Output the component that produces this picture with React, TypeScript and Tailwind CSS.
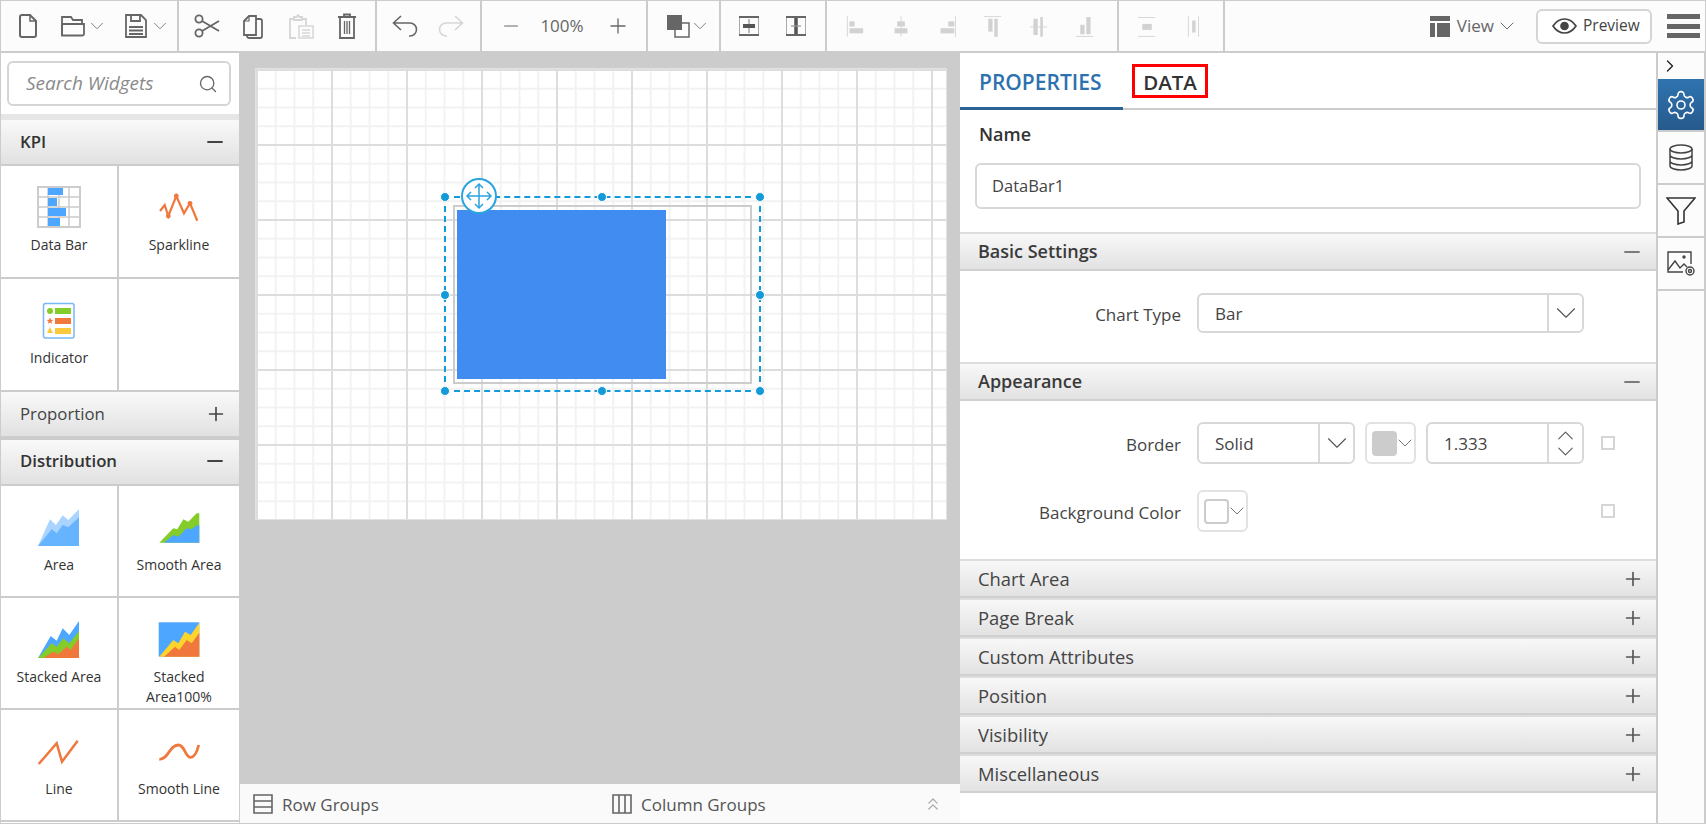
import React from "react";
import { ChevronDown, ChevronUp, ChevronRight, Search, Minus, Plus, ChevronsUp } from "lucide-react";

const FONT = "font-['Open_Sans',sans-serif]";

// toolbar icons, drawn to match the reference strokes
const Doc = () => (
  <svg width="20" height="24" viewBox="0 0 20 24" fill="none" stroke="#666" strokeWidth="2">
    <path d="M2 3a2 2 0 0 1 2-2h8l6 6v14a2 2 0 0 1-2 2H4a2 2 0 0 1-2-2z" />
    <path d="M12 1v6h6" strokeWidth="1.5" />
  </svg>
);
const Folder = () => (
  <svg width="24" height="22" viewBox="0 0 24 22" fill="none" stroke="#666" strokeWidth="1.8">
    <path d="M1 20V2h9l2 3h9v4" />
    <path d="M1 9h22v10a1.5 1.5 0 0 1-1.5 1.5H1z" />
  </svg>
);
const Save = () => (
  <svg width="22" height="24" viewBox="0 0 22 24" fill="none" stroke="#666" strokeWidth="1.8">
    <path d="M1 1h15l5 5v17H1z" />
    <path d="M6 1v6h9V1" />
    <path d="M4 13h14M4 16.500h14M4 20h14" />
  </svg>
);
const Scissors = () => (
  <svg width="26" height="26" viewBox="0 0 26 26" fill="none" stroke="#666" strokeWidth="1.8">
    <circle cx="5" cy="6" r="3.600" />
    <circle cx="5" cy="20" r="3.600" />
    <path d="M8 8l17 10M8 18L25 8" />
  </svg>
);
const CopyIcon = ({ color = "#666" }: { color?: string }) => (
  <svg width="20" height="25" viewBox="0 0 20 25" fill="none" stroke={color} strokeWidth="1.8">
    <path d="M1 7l5-5h7v19H1z" />
    <path d="M1 7h5V2" strokeWidth="1.2" />
    <path d="M13 5h4a2 2 0 0 1 2 2v15a2 2 0 0 1-2 2H6a2 2 0 0 1-2-2v-1" />
  </svg>
);
const Paste = () => (
  <svg width="26" height="25" viewBox="0 0 26 25" fill="none" stroke="#d6d6d6" strokeWidth="1.8">
    <path d="M8 24H2V5h4M14 5h4v6" />
    <path d="M6 6V3h2.500l1.500-2 1.500 2H14v3z" />
    <path d="M11 12h14v12H11zM14 16h8M14 19h8M14 22h8" strokeWidth="1.500" />
  </svg>
);
const Trash = () => (
  <svg width="20" height="26" viewBox="0 0 20 26" fill="none" stroke="#666" strokeWidth="1.8">
    <path d="M1 4h18M7 4V1.500h6V4" />
    <path d="M3 4v21h14V4" />
    <path d="M7.500 8v13M10 8v13M12.500 8v13" strokeWidth="1.300" />
  </svg>
);
const Undo = ({ color = "#666" }: { color?: string }) => (
  <svg width="26" height="24" viewBox="0 0 26 24" fill="none" stroke={color} strokeWidth="1.6">
    <path d="M9 2L1.500 9 9 16M1.500 9H18a6.500 6.500 0 0 1 0 13h-1" />
  </svg>
);
const Order = () => (
  <svg width="24" height="24" viewBox="0 0 24 24">
    <rect x="9" y="9" width="14" height="14" fill="#fff" stroke="#666" strokeWidth="1.500" />
    <rect x="1" y="1" width="15" height="15" fill="#666" />
  </svg>
);
const SpaceIcon = ({ vertical }: { vertical?: boolean }) => (
  <svg width="20" height="20" viewBox="0 0 20 20" fill="none">
    <rect x="0.500" y="1" width="19" height="18" stroke="#aaa" strokeWidth="1" />
    <path d="M0 1h20M0 19h20" stroke="#666" strokeWidth="2" />
    {vertical ? (
      <>
        <path d="M10 2v16" stroke="#555" strokeWidth="3.500" />
        <path d="M5 10h10" stroke="#999" strokeWidth="1.300" />
      </>
    ) : (
      <>
        <path d="M10 3v14" stroke="#999" strokeWidth="1.300" />
        <path d="M4 10h12" stroke="#555" strokeWidth="4" />
      </>
    )}
  </svg>
);

// the greyed-out align buttons
const Align = ({ kind }: { kind: number }) => {
  const c = "#d2d2d2";
  const rects: number[][][] = [
    [[1, 0, 1, 24], [4, 6, 6, 6], [4, 14, 16, 6]],
    [[10, 0, 1, 24], [6, 6, 9, 6], [3, 14, 15, 6]],
    [[20, 0, 1, 24], [12, 6, 7, 6], [3, 14, 16, 6]],
    [[0, 0, 20, 1], [5, 3, 5, 15], [12, 3, 4, 21]],
    [[0, 12, 20, 1], [4, 3, 5, 19], [12, 1, 3, 23]],
    [[0, 23, 20, 1], [5, 10, 5, 11], [12, 1, 5, 20]],
    [[0, 1, 20, 1], [0, 23, 20, 1], [5, 9, 11, 7]],
    [[1, 0, 1, 24], [13, 0, 1, 24], [6, 5, 4, 14]],
  ][kind];
  return (
    <svg width="18" height="21" viewBox="0 0 21 24">
      {rects.map((r, i) => (
        <rect key={i} x={r[0]} y={r[1]} width={r[2]} height={r[3]} fill={c} />
      ))}
    </svg>
  );
};

const Sep = () => <div className="h-full w-[2px] shrink-0 bg-[#ccc]" />;
const Chev = () => <ChevronDown size={22} strokeWidth={0.9} color="#666" className="-mx-[4px]" />;

function Toolbar() {
  return (
    <div className="flex h-[53px] shrink-0 items-center border-x border-t border-b-2 border-[#ccc] bg-[#fcfcfc]">
      <div className="flex h-full w-[176px] items-center pl-[17px]">
        <Doc />
        <div className="ml-[23px] flex items-center gap-[5px]"><Folder /><Chev /></div>
        <div className="ml-[21px] flex items-center gap-[6px]"><Save /><Chev /></div>
      </div>
      <Sep />
      <div className="flex h-full w-[196px] items-center pl-[15px]">
        <Scissors />
        <div className="ml-[23px]"><CopyIcon /></div>
        <div className="ml-[25px]"><Paste /></div>
        <div className="ml-[23px]"><Trash /></div>
      </div>
      <Sep />
      <div className="flex h-full w-[103px] items-center pl-[15px]">
        <Undo />
        <div className="ml-[20px] -scale-x-100"><Undo color="#d6d6d6" /></div>
      </div>
      <Sep />
      <div className="flex h-full w-[164px] items-center pl-[18px]">
        <Minus size={22} strokeWidth={1.3} color="#666" />
        <span className={`ml-[15px] w-[50px] text-center text-[17px] text-[#666] ${FONT}`}>100%</span>
        <Plus size={24} strokeWidth={1.3} color="#666" className="ml-[19px]" />
      </div>
      <Sep />
      <div className="flex h-full w-[71px] items-center gap-[3px] pl-[18px]">
        <Order />
        <Chev />
      </div>
      <Sep />
      <div className="flex h-full w-[104px] items-center gap-[27px] pl-[18px]">
        <SpaceIcon />
        <SpaceIcon vertical />
      </div>
      <Sep />
      <div className="flex h-full w-[290px] items-center gap-[28px] pl-[19px]">
        {[0, 1, 2, 3, 4, 5].map((k) => (
          <Align key={k} kind={k} />
        ))}
      </div>
      <Sep />
      <div className="flex h-full w-[104px] items-center gap-[31px] pl-[19px]">
        <Align kind={6} />
        <Align kind={7} />
      </div>
      <Sep />
      <div className="flex h-full flex-1 items-center justify-end">
        <svg width="20" height="21" viewBox="0 0 20 21">
          <rect x="0" y="0" width="20" height="5" fill="#666" />
          <rect x="0" y="7" width="5" height="14" fill="#666" />
          <rect x="7" y="7" width="13" height="14" fill="#666" />
        </svg>
        <span className={`ml-[7px] text-[17px] text-[#666] ${FONT}`}>View</span>
        <ChevronDown size={24} strokeWidth={0.95} color="#666" className="ml-[1px] -mr-[1px]" />
        <div className={`ml-[18px] flex h-[35px] w-[116px] items-center gap-[6px] rounded-[6px] border-2 border-[#d5d5d5] bg-white pl-[14px] text-[15.5px] text-[#444] ${FONT}`}>
          <svg width="25" height="16" viewBox="0 0 25 16" fill="none" stroke="#444" strokeWidth="1.700">
            <path d="M1 8c3-4.500 7-7 11.500-7S21 3.500 24 8c-3 4.500-7 7-11.500 7S4 12.500 1 8z" />
            <circle cx="12.500" cy="8" r="3.500" fill="#444" />
          </svg>
          Preview
        </div>
        <div className="ml-[15px] mr-[5px] flex flex-col gap-[4.500px]">
          <div className="h-[5px] w-[33px] bg-[#666]" />
          <div className="h-[5px] w-[33px] bg-[#666]" />
          <div className="h-[5px] w-[33px] bg-[#666]" />
        </div>
      </div>
    </div>
  );
}

// widget gallery icons
const DataBarIcon = () => (
  <svg width="44" height="44" viewBox="0 0 44 44">
    <rect x="1" y="3" width="42" height="40" fill="#fff" stroke="#ccc" strokeWidth="2" />
    <path d="M11 3v40M22 3v40M32 3v40M1 13h42M1 23h42M1 33h42" stroke="#ccc" strokeWidth="1.500" />
    <rect x="11" y="4" width="15" height="7" fill="#4da6ff" />
    <rect x="11" y="14" width="9" height="8" fill="#4da6ff" />
    <rect x="11" y="24" width="18" height="8" fill="#4da6ff" />
    <rect x="11" y="34" width="12" height="8" fill="#4da6ff" />
  </svg>
);
const SparkIcon = () => (
  <svg width="44" height="44" viewBox="0 0 44 44" fill="#f0783c">
    <path d="M3 27l4.700-6 3.600 11 8-20 7.700 17.300 6-10 7.300 17.400" fill="none" stroke="#f0783c" strokeWidth="2.200" />
    <circle cx="11.300" cy="32" r="2.400" /><circle cx="19.300" cy="12" r="2.400" /><circle cx="33" cy="19.300" r="2.400" />
  </svg>
);
const IndicatorIcon = () => (
  <svg width="44" height="44" viewBox="0 0 44 44">
    <rect x="6.500" y="6.500" width="30.500" height="34.500" rx="2" fill="#fff" stroke="#7ab8f5" strokeWidth="1.500" />
    <circle cx="13" cy="14" r="3" fill="#84cc29" />
    <rect x="18" y="11" width="16" height="6" fill="#84cc29" />
    <path d="M13 20.500l1 2.200 2.300.2-1.800 1.500.6 2.300-2.100-1.200-2.100 1.200.6-2.300-1.800-1.500 2.300-.2z" fill="#f0783c" />
    <rect x="18" y="21" width="16" height="6" fill="#f0783c" />
    <path d="M13 30l3 6h-6z" fill="#fcc83c" />
    <rect x="18" y="31" width="16" height="6" fill="#fcc83c" />
  </svg>
);
const AreaIcon = () => (
  <svg width="44" height="44" viewBox="0 0 44 44">
    <path d="M1 42l12-26.700 6 5.700 6.700-9.700 5.600 4.700L42 5.300V42z" fill="#a9d4ff" />
    <path d="M1 42l13.700-16.700 5 4 6-8.300 5.600 2.300L42 13.300V42z" fill="#66b3ff" />
  </svg>
);
const SmoothAreaIcon = () => (
  <svg width="44" height="44" viewBox="0 0 44 44">
    <path d="M2.300 38.700l14-14.400 4 1 6-10 5 2.400 8.400-8.400h2.600v29.400z" fill="#84cc29" />
    <path d="M7 38.700L16.300 31l5 1.700 8.400-8.400 5 1 5-4h2.600v17.400z" fill="#4da6ff" />
  </svg>
);
const StackedIcon = () => (
  <svg width="44" height="44" viewBox="0 0 44 44">
    <path d="M1 42l12.700-22 6 4.700 6-12.400 6.600 6.700L42 5v37z" fill="#4da6ff" />
    <path d="M1 42l13.700-14.700 5 3.400 6.600-8.400 6 5L42 15v27z" fill="#84cc29" />
    <path d="M6.300 42l10-6.300 5 2.300 8.400-7.300 4 3.300 8.300-11.700V42z" fill="#f0783c" />
  </svg>
);
const Stacked100Icon = () => (
  <svg width="44" height="44" viewBox="0 0 44 44">
    <rect x="1.700" y="6.300" width="40.600" height="34.400" fill="#4da6ff" />
    <path d="M2.300 40.700L16.300 24l5 3.300 6.700-11.600 5.700 3.300 8.600-12.300v34z" fill="#fcd42c" />
    <path d="M7 40.700l11-10 4.300 3.300 7.400-10 5 3.300 7.600-10.600v24z" fill="#f0783c" />
  </svg>
);
const LineIcon = () => (
  <svg width="44" height="44" viewBox="0 0 44 44" fill="none" stroke="#f0783c" strokeWidth="2.500">
    <path d="M1.700 36l18-20.700L25 33.700l15.700-21" />
  </svg>
);
const SmoothLineIcon = () => (
  <svg width="44" height="44" viewBox="0 0 44 44" fill="none" stroke="#f0783c" strokeWidth="2.800">
    <path d="M2.300 31.300C12 31.300 12 17 21.300 17c6.700 0 6.700 12.300 12.400 12.300 4.300 0 6.300-5.300 8-12.300" />
  </svg>
);

function Cell({ icon, label, tall }: { icon?: React.ReactNode; label?: string; tall?: boolean }) {
  return (
    <div className={`flex flex-col items-center border-b-2 border-[#ccc] pt-[18px] text-center text-[14px] leading-[20px] text-[#333] odd:border-r-2 ${tall ? "h-[113px]" : "h-[112px]"}`}>
      <div className="h-[44px]">{icon}</div>
      <div className="mt-[7px] w-[100px]">{label}</div>
    </div>
  );
}

function GroupHeader({ title, open, h = "h-[46px]" }: { title: string; open?: boolean; h?: string }) {
  return (
    <div className={`flex shrink-0 items-center justify-between border-b-2 border-[#ccc] bg-gradient-to-b from-[#f9f9f9] to-[#e1e1e1] pl-[19px] pr-[12px] ${h}`}>
      <span className={`text-[16.8px] text-[#333] ${open ? "font-semibold" : "text-[#444]"}`}>{title}</span>
      {open ? <Minus size={24} strokeWidth={1.8} color="#444" /> : <Plus size={22} strokeWidth={1.8} color="#444" />}
    </div>
  );
}

function LeftPanel() {
  return (
    <div className={`flex w-[240px] shrink-0 flex-col overflow-hidden border-x border-[#ccc] bg-white ${FONT}`}>
      <div className="h-[67px] shrink-0 border-b-[6px] border-[#e6e6e6] pl-[6px] pt-[8px]">
        <div className="flex h-[45px] w-[224px] items-center justify-between rounded-[6px] border-2 border-[#d5d5d5] pl-[17px] pr-[11px]">
          <span className="text-[19px] italic text-[#8a8a8a]">Search Widgets</span>
          <Search size={20} strokeWidth={1.6} color="#666" />
        </div>
      </div>
      <GroupHeader title="KPI" open />
      <div className="grid shrink-0 grid-cols-[118px_120px]">
        <Cell icon={<DataBarIcon />} label="Data Bar" tall />
        <Cell icon={<SparkIcon />} label="Sparkline" tall />
        <Cell icon={<IndicatorIcon />} label="Indicator" tall />
        <Cell tall />
      </div>
      <GroupHeader title="Proportion" />
      <GroupHeader title="Distribution" open h="h-[48px] border-t-2 border-t-[#ccc] pb-[3px]" />
      <div className="grid shrink-0 grid-cols-[118px_120px]">
        <Cell icon={<AreaIcon />} label="Area" />
        <Cell icon={<SmoothAreaIcon />} label="Smooth Area" />
        <Cell icon={<StackedIcon />} label="Stacked Area" />
        <Cell icon={<Stacked100Icon />} label="Stacked Area100%" />
        <Cell icon={<LineIcon />} label="Line" />
        <Cell icon={<SmoothLineIcon />} label="Smooth Line" />
      </div>
    </div>
  );
}

const Dot = ({ className }: { className: string }) => (
  <div className={`absolute size-[10px] rounded-full border border-white bg-[#149ad8] ${className}`} />
);

function Canvas() {
  return (
    <div className={`flex w-[720px] shrink-0 flex-col bg-[#ccc] ${FONT}`}>
      <div className="flex-1 pl-[15px] pt-[15px]">
        <div className="relative h-[452px] w-[692px] border border-[#e2e2e2] bg-white [background-image:linear-gradient(to_right,#dddddd_2px,transparent_2px),linear-gradient(to_bottom,#dddddd_2px,transparent_2px),linear-gradient(to_right,#f2f2f2_2px,transparent_2px),linear-gradient(to_bottom,#f2f2f2_2px,transparent_2px)] [background-size:75px_75px,75px_75px,18.75px_18.75px,18.75px_18.75px]">
          <div className="absolute left-[188px] top-[127px] h-[196px] w-[317px] border-2 border-dashed border-[#149ad8]">
            <div className="absolute left-[7px] top-[7px] h-[179px] w-[299px] border-2 border-[#ccc]" />
            <div className="absolute left-[11px] top-[12px] h-[169px] w-[209px] bg-[#418cf0]" />
            <Dot className="-left-[6px] -top-[6px]" />
            <Dot className="left-[151px] -top-[6px]" />
            <Dot className="-right-[6px] -top-[6px]" />
            <Dot className="-left-[6px] top-[92px]" />
            <Dot className="-right-[6px] top-[92px]" />
            <Dot className="-bottom-[6px] -left-[6px]" />
            <Dot className="-bottom-[6px] left-[151px]" />
            <Dot className="-bottom-[6px] -right-[6px]" />
            <div className="absolute left-[15px] -top-[20px] flex size-[36px] items-center justify-center rounded-full border-2 border-[#2ba3df] bg-white">
              <svg width="28" height="28" viewBox="0 0 28 28" fill="none" stroke="#2ba3df" strokeWidth="1.500">
                <path d="M14 2v24M2 14h24M10 6l4-4 4 4M10 22l4 4 4-4M6 10l-4 4 4 4M22 10l4 4-4 4" />
              </svg>
            </div>
          </div>
        </div>
      </div>
      <div className="flex h-[39px] shrink-0 items-center bg-[#fafafa] pl-[13px] text-[17px] text-[#555]">
        <svg width="20" height="20" viewBox="0 0 20 20" fill="none" stroke="#666" strokeWidth="1.600">
          <path d="M1 1h18v18H1zM1 7h18M1 13h18" />
        </svg>
        <span className="ml-[9px] w-[330px] pt-[3px]">Row Groups</span>
        <svg width="20" height="20" viewBox="0 0 20 20" fill="none" stroke="#666" strokeWidth="1.600">
          <path d="M1 1h18v18H1zM7 1v18M13 1v18" />
        </svg>
        <span className="ml-[9px] pt-[2px]">Column Groups</span>
        <ChevronsUp size={20} strokeWidth={1.5} color="#aaa" className="ml-auto mr-[17px]" />
      </div>
    </div>
  );
}

function SectionHeader({ title, open }: { title: string; open?: boolean }) {
  return (
    <div className="flex h-[39px] shrink-0 items-center justify-between border-y-2 border-y-[#d0d0d0] border-t-[#ddd] bg-gradient-to-b from-[#f8f8f8] to-[#e2e2e2] pl-[18px] pr-[12px] text-[18.4px] text-[#444]">
      <span className={open ? "text-[18px] font-semibold text-[#3a3a3a]" : ""}>{title}</span>
      {open ? <Minus size={24} strokeWidth={1.7} color="#555" /> : <Plus size={22} strokeWidth={1.8} color="#555" />}
    </div>
  );
}

const Label = ({ children }: { children: React.ReactNode }) => (
  <span className="w-[237px] shrink-0 pr-[16px] pt-[3px] text-right text-[17px] text-[#444]">{children}</span>
);

function ColorPick({ swatch }: { swatch: string }) {
  return (
    <div className="flex h-[42px] w-[51px] items-center gap-[1px] rounded-[6px] border-2 border-[#e2e2e2] pl-[5px]">
      <div className={`size-[25px] shrink-0 rounded-[4px] border-2 border-[#ccc] ${swatch}`} />
      <ChevronDown size={24} strokeWidth={0.9} color="#666" className="-mx-[5px] shrink-0" />
    </div>
  );
}

const Box = () => <div className="size-[14px] border-2 border-[#d5d5d5]" />;

function RightPanel() {
  return (
    <div className={`flex w-[696px] shrink-0 flex-col bg-white ${FONT}`}>
      <div className="flex h-[57px] shrink-0 border-b-2 border-[#ccc]">
        <div className="-mb-[2px] flex w-[163px] items-start border-b-[3px] border-[#2a6496] pl-[19px] pt-[14px] text-[21px] font-semibold text-[#2d72ae]">PROPERTIES</div>
        <div className="ml-[9px] mt-[11px] flex h-[34px] w-[76px] items-center justify-center border-[3px] border-[#f00] pt-[2px] text-[20.5px] font-semibold text-[#333]">DATA</div>
      </div>
      <div className="flex h-[122px] shrink-0 flex-col px-[15px]">
        <div className="ml-[4px] mt-[12px] text-[18px] font-semibold leading-[24px] text-[#333]">Name</div>
        <div className="mt-[17px] flex h-[46px] items-center rounded-[6px] border-2 border-[#d8d8d8] pl-[15px] pt-[1px] text-[16.5px] text-[#444]">DataBar1</div>
      </div>
      <SectionHeader title="Basic Settings" open />
      <div className="flex h-[91px] shrink-0 items-start pt-[22px]">
        <div className="flex h-[40px] items-center">
          <Label>Chart Type</Label>
          <div className="flex h-[40px] w-[387px] items-center rounded-[6px] border-2 border-[#d8d8d8] pl-[16px] text-[17px] text-[#444]">
            <span className="flex-1 pt-[2px]">Bar</span>
            <div className="flex h-full w-[35px] items-center justify-center border-l-2 border-[#d8d8d8]">
              <ChevronDown size={34} strokeWidth={0.8} color="#555" className="shrink-0" />
            </div>
          </div>
        </div>
      </div>
      <SectionHeader title="Appearance" open />
      <div className="h-[158px] shrink-0 pt-[21px]">
        <div className="flex h-[42px] items-center">
          <Label>Border</Label>
          <div className="flex h-[42px] w-[158px] items-center rounded-[6px] border-2 border-[#d8d8d8] pl-[16px] text-[17px] text-[#444]">
            <span className="flex-1 pt-[1px]">Solid</span>
            <div className="flex h-full w-[35px] items-center justify-center border-l-2 border-[#d8d8d8]">
              <ChevronDown size={34} strokeWidth={0.8} color="#555" className="shrink-0" />
            </div>
          </div>
          <div className="ml-[10px]"><ColorPick swatch="bg-[#ccc]" /></div>
          <div className="ml-[10px] flex h-[42px] w-[158px] items-center rounded-[6px] border-2 border-[#d8d8d8] pl-[16px] text-[17px] text-[#444]">
            <span className="flex-1 pt-[1px]">1.333</span>
            <div className="flex h-full w-[35px] flex-col items-center justify-center border-l-2 border-[#d8d8d8]">
              <ChevronUp size={27} strokeWidth={0.9} color="#555" className="-my-[5.5px] shrink-0" />
              <ChevronDown size={27} strokeWidth={0.9} color="#555" className="-my-[5.5px] shrink-0" />
            </div>
          </div>
          <div className="ml-[17px]"><Box /></div>
        </div>
        <div className="mt-[26px] flex h-[42px] items-center">
          <Label>Background Color</Label>
          <ColorPick swatch="bg-white" />
          <div className="ml-[353px]"><Box /></div>
        </div>
      </div>
      {["Chart Area", "Page Break", "Custom Attributes", "Position", "Visibility", "Miscellaneous"].map((t) => (
        <SectionHeader key={t} title={t} />
      ))}
    </div>
  );
}

function SideStrip() {
  const cell = "flex h-[53px] items-center justify-center border-b-2 border-[#ccc]";
  return (
    <div className="flex w-[50px] shrink-0 flex-col border-x-2 border-[#ccc] bg-[#fcfcfc]">
      <div className="flex h-[26px] items-center pl-[2px]">
        <ChevronRight size={20} strokeWidth={1.6} color="#222" />
      </div>
      <div className="flex h-[53px] items-center justify-center border-b-2 border-[#ccc] bg-gradient-to-b from-[#2f74b0] to-[#265a8c]">
        <svg width="32" height="32" viewBox="0 0 24 24" fill="none" stroke="#fff" strokeWidth="1.200">
          <path d="M12.220 2h-.44a2 2 0 0 0-2 2v.18a2 2 0 0 1-1 1.730l-.43.25a2 2 0 0 1-2 0l-.15-.08a2 2 0 0 0-2.730.730l-.22.380a2 2 0 0 0 .730 2.730l.15.100a2 2 0 0 1 1 1.720v.510a2 2 0 0 1-1 1.740l-.15.090a2 2 0 0 0-.730 2.730l.22.380a2 2 0 0 0 2.730.730l.15-.08a2 2 0 0 1 2 0l.43.250a2 2 0 0 1 1 1.730V20a2 2 0 0 0 2 2h.44a2 2 0 0 0 2-2v-.18a2 2 0 0 1 1-1.730l.43-.25a2 2 0 0 1 2 0l.15.080a2 2 0 0 0 2.730-.730l.22-.390a2 2 0 0 0-.730-2.730l-.15-.080a2 2 0 0 1-1-1.740v-.500a2 2 0 0 1 1-1.740l.15-.090a2 2 0 0 0 .730-2.730l-.22-.380a2 2 0 0 0-2.730-.730l-.15.080a2 2 0 0 1-2 0l-.43-.250a2 2 0 0 1-1-1.730V4a2 2 0 0 0-2-2z" />
          <circle cx="12" cy="12" r="3" />
        </svg>
      </div>
      <div className={cell}>
        <svg width="24" height="27" viewBox="0 0 24 27" fill="none" stroke="#444" strokeWidth="1.500">
          <ellipse cx="12" cy="5" rx="11" ry="4" />
          <path d="M1 5v17c0 2.200 5 4 11 4s11-1.800 11-4V5M1 11c0 2.200 5 4 11 4s11-1.800 11-4M1 17c0 2.200 5 4 11 4s11-1.800 11-4" />
        </svg>
      </div>
      <div className={cell}>
        <svg width="30" height="28" viewBox="0 0 30 28" fill="none" stroke="#333" strokeWidth="1.600">
          <path d="M1 1h28L18 14v11l-6 2V14z" />
        </svg>
      </div>
      <div className={cell}>
        <svg width="29" height="26" viewBox="0 0 29 26" fill="none" stroke="#444" strokeWidth="1.400">
          <path d="M24 13V1H1v20h15" />
          <path d="M1 19l7-9 5 7 4-4 3 3" />
          <circle cx="17" cy="6" r="1" fill="#444" />
          <circle cx="23" cy="20" r="4" />
          <circle cx="23" cy="20" r="1.500" />
        </svg>
      </div>
    </div>
  );
}

export default function App() {
  return (
    <div className={`flex h-[824px] w-[1706px] flex-col overflow-hidden bg-white ${FONT}`}>
      <Toolbar />
      <div className="flex min-h-0 flex-1 border-b border-[#ccc]">
        <LeftPanel />
        <Canvas />
        <RightPanel />
        <SideStrip />
      </div>
    </div>
  );
}
